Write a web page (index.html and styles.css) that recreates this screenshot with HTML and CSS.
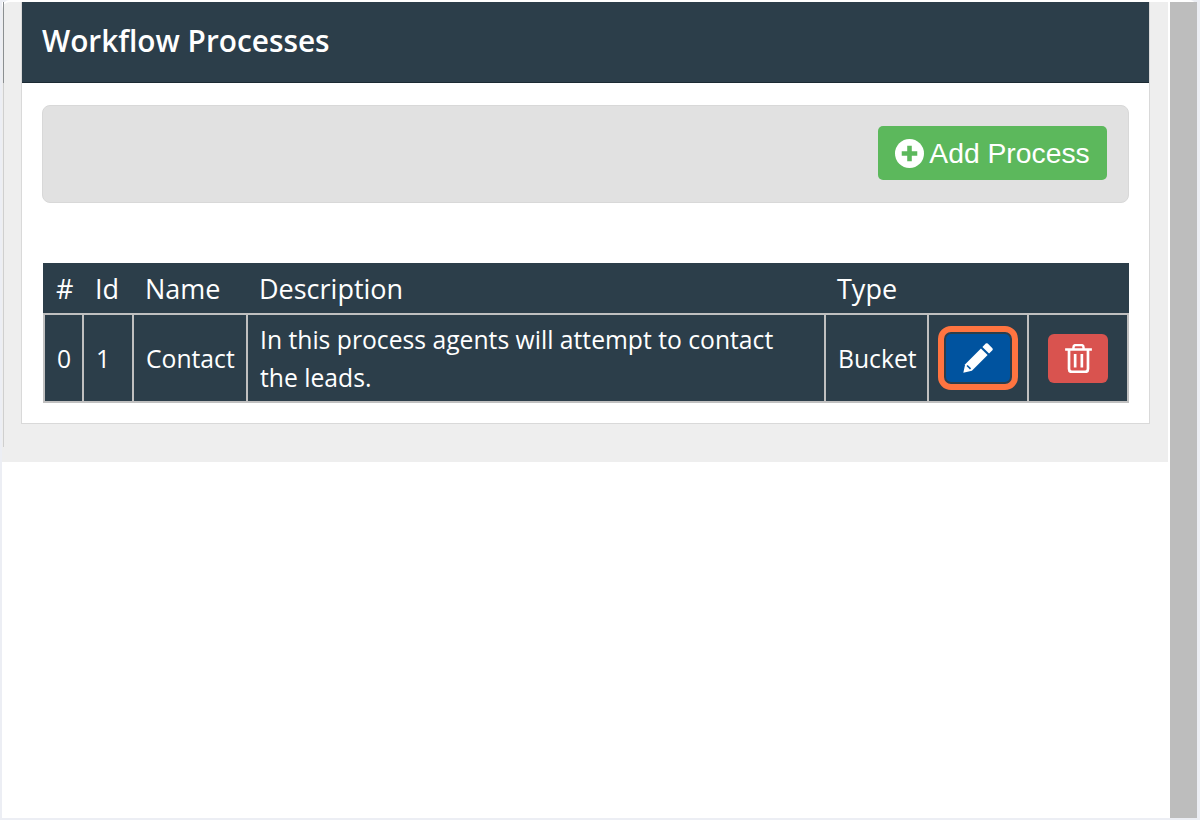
FILE: index.html
```html
<!DOCTYPE html>
<html lang="en">
<head>
    <meta charset="UTF-8">
    <meta name="viewport" content="width=device-width, initial-scale=1.0">
    <title>Workflow Processes</title>
    <link rel="stylesheet" href="styles.css">
</head>
<body>
    <div class="window">
        <div class="main">
            <div class="page">
                <div class="page-inner">
                    <div class="panel">
                        <div class="panel-heading">
                            <h2>Workflow Processes</h2>
                        </div>
                        <div class="panel-body">
                            <div class="well">
                                <button class="btn btn-add">
                                    <svg class="icon-plus" viewBox="0 0 28 28" width="29" height="29">
                                        <circle cx="14" cy="14" r="14" fill="#fff"/>
                                        <path d="M14 6.500v15M6.500 14h15" stroke="#5cb85c" stroke-width="4.400"/>
                                    </svg>
                                    <span>Add Process</span>
                                </button>
                            </div>
                            <table class="process-table">
                                <thead>
                                    <tr>
                                        <th class="col-num">#</th>
                                        <th class="col-id">Id</th>
                                        <th class="col-name">Name</th>
                                        <th class="col-desc">Description</th>
                                        <th class="col-type">Type</th>
                                        <th class="col-edit"></th>
                                        <th class="col-del"></th>
                                    </tr>
                                </thead>
                                <tbody>
                                    <tr>
                                        <td>0</td>
                                        <td>1</td>
                                        <td>Contact</td>
                                        <td>In this process agents will attempt to contact the leads.</td>
                                        <td>Bucket</td>
                                        <td class="cell-action">
                                            <button class="btn btn-edit" aria-label="Edit">
                                                <svg viewBox="4 4 24 24" width="32" height="32">
                                                    <path d="M21.800 5.200q.8-.7 1.500 0l3.500 3.500q.7.7 0 1.500l-2.500 2.500-5-5z" fill="#fff"/>
                                                    <path d="M18.200 8.800l5 5L11.400 25.600 5 27l1.400-6.400z" fill="#fff"/>
                                                    <path d="M7.800 21.600l2.600 2.600" stroke="#00539f" stroke-width="1.200"/>
                                                </svg>
                                            </button>
                                        </td>
                                        <td class="cell-action">
                                            <button class="btn btn-delete" aria-label="Delete">
                                                <svg viewBox="2 3 24 26" width="27" height="29">
                                                    <path d="M2 8h24M9.500 8V6q0-2 2-2h5q2 0 2 2v2" fill="none" stroke="#fff" stroke-width="2.200"/>
                                                    <path d="M5.500 8v17.500q0 2.500 2.500 2.500h12q2.500 0 2.500-2.500V8" fill="none" stroke="#fff" stroke-width="2.400"/>
                                                    <path d="M11 12v12M17 12v12" stroke="#fff" stroke-width="2.400"/>
                                                </svg>
                                            </button>
                                        </td>
                                    </tr>
                                </tbody>
                            </table>
                        </div>
                    </div>
                </div>
            </div>
        </div>
        <div class="scrollbar"></div>
    </div>
</body>
</html>
```
FILE: styles.css
```css
* {
    box-sizing: border-box;
}

html, body {
    height: 100%;
}

body {
    font-family: "Open Sans", "Noto Sans", Arial, sans-serif;
    background-color: #eceef4;
    margin: 0;
    overflow: hidden;
}

.window {
    display: flex;
    height: 818px;
    margin: 0 3px 0 2px;
    padding-top: 2px;
    background-color: #ffffff;
    border-radius: 8px;
}

.main {
    flex: 1;
    min-width: 0;
    background-color: #ffffff;
}

.page {
    height: 460px;
    background-color: #eeeeee;
    border-top-left-radius: 8px;
}

/* thin edge of the sidebar that sits behind the panel */
.page-inner {
    height: 445px;
    padding-right: 18px;
    padding-left: 19px;
    background:
        linear-gradient(#8b8f92, #8b8f92) 1px 0 / 1px 81px no-repeat,
        linear-gradient(#cfcfcf, #cfcfcf) 1px 0 / 1px 100% no-repeat;
}

.panel {
    height: 422px;
    background-color: #ffffff;
    border: 1px solid #d9d9d9;
    border-top: none;
}

.panel-heading {
    height: 81px;
    padding-left: 20px;
    padding-bottom: 4px;
    background-color: #2c3e4a;
    border-bottom: 1px solid #1b2a33;
    display: flex;
    align-items: center;
}

.panel-heading h2 {
    margin: 0;
    font-size: 29.800px;
    font-weight: 600;
    color: #ffffff;
}

.panel-body {
    padding: 22px 20px 0;
}

.well {
    display: flex;
    justify-content: flex-end;
    align-items: center;
    height: 98px;
    padding-right: 21px;
    padding-bottom: 2px;
    background-color: #e1e1e1;
    border: 1px solid #d8d8d8;
    border-radius: 8px;
    margin-bottom: 60px;
}

.btn {
    border: none;
    color: #ffffff;
    cursor: pointer;
    padding: 0;
    display: flex;
    align-items: center;
    justify-content: center;
}

.btn-add {
    width: 229px;
    height: 54px;
    gap: 5px;
    background-color: #5cb85c;
    border-radius: 5px;
    font-family: "Liberation Sans", Arial, sans-serif;
    font-size: 28.300px;
}

.process-table {
    width: 1084px;
    margin-left: 1px;
    border-collapse: collapse;
    table-layout: fixed;
    color: #ffffff;
    font-size: 24.700px;
    background-color: #2c3e4a;
}

.process-table th {
    height: 51px;
    padding: 0 12px;
    font-size: 27px;
    font-weight: 400;
    text-align: left;
    border-bottom: 2px solid #c0c0c0;
}

.process-table td {
    height: 88px;
    padding: 2px 12px 0;
    line-height: 38px;
    border: 2px solid #c0c0c0;
}

.col-num { width: 39px; }
.col-id { width: 50px; }
.col-name { width: 114px; }
.col-desc { width: 578px; }
.col-type { width: 103px; }
.col-edit { width: 100px; }
.col-del { width: 100px; }

.process-table .cell-action {
    padding: 0;
}

.btn-edit {
    width: 80px;
    height: 64px;
    margin: 0 auto;
    background-color: #00539f;
    border: 6px solid #ff7440;
    border-radius: 13px;
    box-shadow: inset 0 0 0 2px #2c3e4a;
}

.btn-delete {
    width: 60px;
    height: 49px;
    margin: 0 auto;
    background-color: #d9534f;
    border-radius: 6px;
}

.scrollbar {
    width: 27px;
    margin-left: 2px;
    background-color: #bdbdbd;
}
```
